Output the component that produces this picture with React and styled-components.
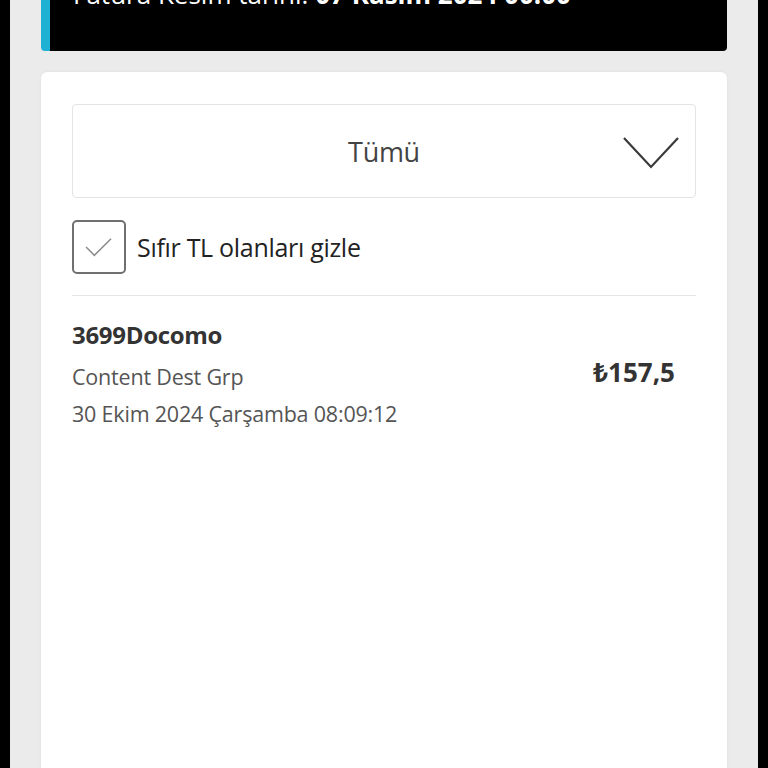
import React from "react"
import styled, { createGlobalStyle } from "styled-components"

const GlobalStyle = createGlobalStyle`
  html, body {
    margin: 0;
    padding: 0;
    background: #000;
  }
  body {
    font-family: "Open Sans", "Noto Sans", sans-serif;
    overflow: hidden;
  }
`

export default function App() {
  return (
    <>
      <GlobalStyle />
      <Screen>
        <Page>
          <BillBanner>
            <BannerText>
              Fatura Kesim tarihi: <strong>07 Kasım 2024 00:00</strong>
            </BannerText>
          </BillBanner>

          <Card>
            <Select>
              <SelectLabel>Tümü</SelectLabel>
              <Chevron viewBox="0 0 56 32">
                <polyline points="1,1 28,30 55,1" />
              </Chevron>
            </Select>

            <CheckRow>
              <CheckBox>
                <svg viewBox="0 0 54 54" width="52" height="52">
                  <polyline points="13,27 22,36 40,18" />
                </svg>
              </CheckBox>
              <CheckLabel>Sıfır TL olanları gizle</CheckLabel>
            </CheckRow>

            <Divider />

            <Transaction>
              <TxInfo>
                <TxTitle>3699Docomo</TxTitle>
                <TxMeta>Content Dest Grp</TxMeta>
                <TxMeta>30 Ekim 2024 Çarşamba 08:09:12</TxMeta>
              </TxInfo>
              <TxAmount>₺157,5</TxAmount>
            </Transaction>
          </Card>
        </Page>
      </Screen>
    </>
  )
}

const Screen = styled.div`
  background: #000;
  padding: 0 10px;
  height: 768px;
  overflow: hidden;
`

const Page = styled.div`
  background: #ebebeb;
  height: 100%;
  padding: 0 31px;
  display: flex;
  flex-direction: column;
  gap: 21px;
`

const BillBanner = styled.div`
  margin-top: -40px;
  height: 91px;
  background: #000;
  border-left: 9px solid #1fb1d3;
  border-radius: 0 0 4px 4px;
  box-sizing: border-box;
  padding: 18px 0 0 23px;
`

const BannerText = styled.div`
  color: #fff;
  font-size: 26px;
  line-height: 32px;
  strong {
    font-weight: 700;
  }
`

const Card = styled.div`
  flex: 1;
  background: #fff;
  border-radius: 6px 6px 0 0;
  box-shadow: 0 0 3px rgba(0, 0, 0, 0.06);
  padding: 32px 31px 0;
  display: flex;
  flex-direction: column;
`

const Select = styled.div`
  height: 94px;
  box-sizing: border-box;
  border: 1px solid #e4e4e4;
  border-radius: 4px;
  display: flex;
  align-items: center;
  justify-content: center;
  position: relative;
`

const SelectLabel = styled.span`
  font-size: 27px;
  color: #444;
  letter-spacing: -0.3px;
`

const Chevron = styled.svg`
  position: absolute;
  right: 16px;
  top: 32px;
  width: 56px;
  height: 32px;
  fill: none;
  stroke: #3a3a3a;
  stroke-width: 2.2;
`

const CheckRow = styled.div`
  display: flex;
  align-items: center;
  gap: 11px;
  margin-top: 22px;
`

const CheckBox = styled.div`
  width: 54px;
  height: 54px;
  box-sizing: border-box;
  border: 2px solid #707070;
  border-radius: 5px;
  display: flex;
  align-items: center;
  justify-content: center;
  svg {
    fill: none;
    stroke: #8a8a8a;
    stroke-width: 1.6;
  }
`

const CheckLabel = styled.span`
  font-size: 25px;
  color: #222;
  letter-spacing: -0.3px;
`

const Divider = styled.div`
  height: 1px;
  background: #e6e6e6;
  margin-top: 21px;
`

const Transaction = styled.div`
  display: flex;
  align-items: center;
  justify-content: space-between;
  padding: 20px 21px 0 0;
`

const TxInfo = styled.div`
  display: flex;
  flex-direction: column;
`

const TxTitle = styled.div`
  font-size: 24px;
  font-weight: 700;
  color: #333;
  line-height: 38px;
  margin-bottom: 4px;
  letter-spacing: -0.3px;
`

const TxMeta = styled.div`
  font-size: 21.5px;
  color: #555;
  line-height: 37px;
  letter-spacing: -0.2px;
`

const TxAmount = styled.div`
  font-size: 26px;
  font-weight: 700;
  color: #333;
  margin-bottom: 4px;
`
